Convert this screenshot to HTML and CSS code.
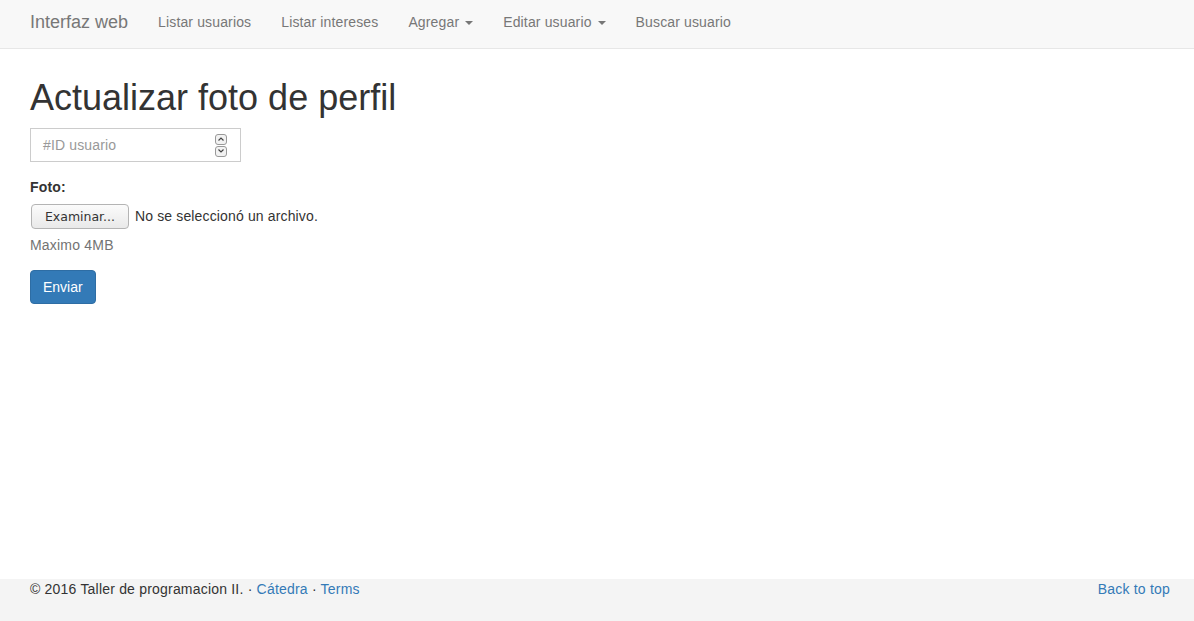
FILE: index.html
```html
<!DOCTYPE html>
<html lang="es">
<head>
<meta charset="utf-8">
<title>Actualizar foto de perfil</title>
<link rel="stylesheet" href="styles.css">
</head>
<body>
<div class="page">
  <nav class="navbar">
    <a class="brand" href="#">Interfaz web</a>
    <ul class="nav">
      <li><a href="#">Listar usuarios</a></li>
      <li><a href="#">Listar intereses</a></li>
      <li><a href="#">Agregar <span class="caret"></span></a></li>
      <li><a href="#">Editar usuario <span class="caret"></span></a></li>
      <li><a href="#">Buscar usuario</a></li>
    </ul>
  </nav>
  <main class="content">
    <h1 class="title">Actualizar foto de perfil</h1>
    <form class="form">
      <div class="form-group">
        <div class="number-input">
          <span class="placeholder">#ID usuario</span>
          <span class="spinner">
            <span class="spin up"><svg viewBox="0 0 8 6" width="8" height="6"><path d="M1.5 4.5 L4 2 L6.5 4.5" fill="none" stroke="#444" stroke-width="1.2"/></svg></span>
            <span class="spin down"><svg viewBox="0 0 8 6" width="8" height="6"><path d="M1.5 1.5 L4 4 L6.5 1.5" fill="none" stroke="#444" stroke-width="1.2"/></svg></span>
          </span>
        </div>
      </div>
      <div class="form-group">
        <label class="label">Foto:</label>
        <div class="file-row">
          <span class="file-btn">Examinar...</span>
          <span class="file-name">No se seleccionó un archivo.</span>
        </div>
        <p class="help">Maximo 4MB</p>
      </div>
      <button type="button" class="btn-primary">Enviar</button>
    </form>
  </main>
  <footer class="footer">
    <p class="footer-left">© 2016 Taller de programacion II. · <a href="#">Cátedra</a> · <a href="#">Terms</a></p>
    <p class="footer-right"><a href="#">Back to top</a></p>
  </footer>
</div>
</body>
</html>
```

FILE: styles.css
```css
* { box-sizing: border-box; }
html, body { margin: 0; padding: 0; }
body {
  font-family: "Liberation Sans", Arial, sans-serif;
  font-size: 14px;
  line-height: 20px;
  color: #333;
  background: #fff;
}
a { text-decoration: none; color: #337ab7; }
.page {
  height: 621px;
  display: flex;
  flex-direction: column;
}
.navbar {
  display: flex;
  align-items: stretch;
  height: 49px;
  background: #f8f8f8;
  border-bottom: 1px solid #e7e7e7;
  padding: 0 15px;
  flex: none;
}
.brand {
  color: #777;
  font-size: 18px;
  line-height: 20px;
  padding: 12px 15px 16px;
}
.nav {
  display: flex;
  list-style: none;
  margin: 0;
  padding: 0;
}
.nav a {
  display: block;
  color: #777;
  padding: 12px 15px 16px;
  letter-spacing: 0.14px;
}
.caret {
  display: inline-block;
  width: 0;
  height: 0;
  margin-left: 2px;
  vertical-align: middle;
  border-top: 4px solid #777;
  border-left: 4px solid transparent;
  border-right: 4px solid transparent;
}
.content {
  flex: 1;
  padding: 0 30px;
}
.title {
  font-size: 36px;
  font-weight: 500;
  line-height: 40px;
  margin: 29px 0 10px;
  color: #333;
}
.form-group { margin-bottom: 15px; }
.number-input {
  width: 211px;
  height: 34px;
  border: 1px solid #ccc;
  display: flex;
  align-items: center;
  justify-content: space-between;
  padding: 0 13px 0 12px;
}
.placeholder { color: #999; letter-spacing: 0.14px; }
.spinner {
  display: flex;
  flex-direction: column;
  gap: 1px;
}
.spin {
  width: 12px;
  height: 11px;
  border: 1px solid #999;
  border-radius: 3px;
  background: #f2f2f2;
  display: flex;
  align-items: center;
  justify-content: center;
}
.label {
  display: inline-block;
  font-weight: bold;
  margin-bottom: 5px;
  letter-spacing: 0.14px;
}
.file-row {
  display: flex;
  align-items: center;
  gap: 6px;
  height: 28px;
  padding-left: 1px;
}
.file-btn {
  font-family: "DejaVu Sans", sans-serif;
  font-size: 12.5px;
  color: #333;
  width: 98px;
  height: 25px;
  line-height: 23px;
  text-align: center;
  border: 1px solid #b4b4b4;
  border-radius: 4px;
  background: linear-gradient(#fbfbfb, #e9e9e9);
}
.file-name { letter-spacing: 0.14px; }
.help {
  margin: 5px 0 10px;
  color: #737373;
  letter-spacing: 0.2px;
}
.btn-primary {
  font-family: "Liberation Sans", Arial, sans-serif;
  font-size: 14px;
  line-height: 20px;
  color: #fff;
  background: #337ab7;
  border: 1px solid #2e6da4;
  border-radius: 4px;
  padding: 6px 12px;
  margin-top: 0;
}
.footer {
  flex: none;
  height: 42px;
  background: #f4f4f4;
  display: flex;
  justify-content: space-between;
  padding: 0 24px 0 30px;
  letter-spacing: 0.2px;
}
.footer p { margin: 0; }
```
